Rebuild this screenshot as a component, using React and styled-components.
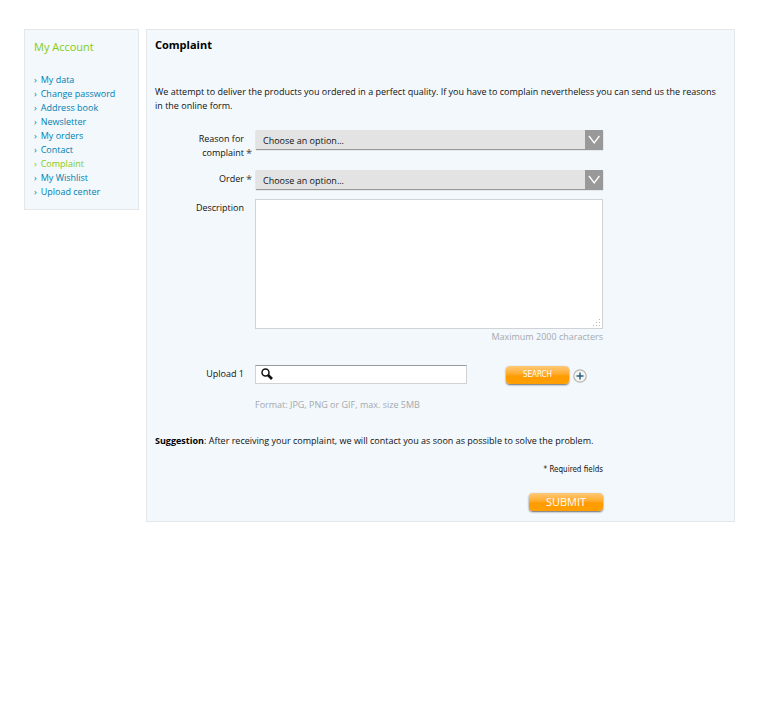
import React from 'react'
import styled, { createGlobalStyle } from "styled-components";

const GlobalStyle = createGlobalStyle`
    * {
        box-sizing: border-box;
    }

    body {
        margin: 0;
        background: #fff;
        color: #111;
        font-family: "Open Sans", "Noto Sans", sans-serif;
        font-size: 9px;
        line-height: 14px;
    }

    button, input, select, textarea {
        font: inherit;
        color: inherit;
        margin: 0;
    }
`;

const Page = styled.div`
    display: flex;
    align-items: flex-start;
    gap: 7px;
    padding: 29px 23px 29px 24px;
`;

const Panel = styled.div`
    background: #f2f8fc;
    border: 1px solid #e4e6e8;
`;

const Sidebar = styled(Panel)`
    flex: 0 0 115px;
    padding: 10px 9px;
`;

const SidebarTitle = styled.h2`
    margin: 0 0 19px;
    font-size: 11px;
    line-height: 14px;
    font-weight: normal;
    color: #84cb12;
`;

const Menu = styled.ul`
    margin: 0;
    padding: 0;
    list-style: none;
`;

const MenuLink = styled.a`
    display: flex;
    gap: 4px;
    white-space: nowrap;
    text-decoration: none;
    color: ${(props) => (props.$active ? "#84cb12" : "#0080b0")};
`;

const Content = styled(Panel)`
    flex: 1;
    min-width: 0;
    padding: 8px 8px 10px;
`;

const Title = styled.h1`
    margin: 0 0 33px;
    font-size: 11px;
    line-height: 14px;
    color: #000;
`;

const Text = styled.p`
    margin: 0;
    padding-right: 8px;
`;

const Form = styled.form`
    max-width: 448px;
    margin-top: 17px;
`;

const Row = styled.div`
    display: grid;
    grid-template-columns: 100px 1fr;
    margin-bottom: ${(props) => (props.$spaced ? "21px" : "10px")};
`;

const Label = styled.label`
    display: flex;
    align-items: flex-end;
    align-self: start;
    justify-content: flex-end;
    padding: 2px 0 0 32px;
    text-align: right;
`;

const Star = styled.span`
    flex: 0 0 11px;
    text-align: left;
    padding-left: 2px;
    font-size: 11px;
    color: #444;
`;

const SelectBox = styled.div`
    position: relative;
    align-self: start;
    height: 19px;
    margin-left: 1px;
    box-shadow: 0 1px 1px #999;

    select {
        display: block;
        width: 100%;
        height: 19px;
        padding: 2px 24px 0 7px;
        border: 0;
        border-radius: 0;
        appearance: none;
        background: #e3e3e3;
    }

    svg {
        position: absolute;
        top: 0;
        right: 0;
        background: #999;
        pointer-events: none;
    }
`;

const DescriptionBox = styled.div`
    position: relative;

    svg {
        position: absolute;
        right: 2px;
        bottom: 2px;
        pointer-events: none;
    }
`;

const TextArea = styled.textarea`
    display: block;
    width: 100%;
    height: 130px;
    padding: 4px;
    border: 1px solid #d0d3d5;
    background: #fff;
    resize: vertical;

    &::-webkit-resizer {
        background: transparent;
    }
`;

const Hint = styled.p`
    margin: ${(props) => (props.$right ? "1px 0 0" : "14px 0 0")};
    text-align: ${(props) => (props.$right ? "right" : "left")};
    color: #a6a9ac;
`;

const Upload = styled.div`
    display: flex;
    align-items: center;
    height: 19px;
`;

const FileField = styled.div`
    flex: 0 0 61%;
    display: flex;
    align-items: center;
    height: 19px;
    padding-left: 5px;
    border: 1px solid #d0d3d5;
    border-top: 1px solid #999;
    background: #fff;

    svg {
        margin-bottom: 2px;
    }

    input {
        flex: 1;
        min-width: 0;
        height: 15px;
        border: 0;
        background: none;
        outline: none;
    }
`;

const OrangeButton = styled.button`
    display: block;
    width: ${(props) => (props.$large ? "74px" : "63px")};
    height: 18px;
    margin-left: auto;
    padding: 0;
    border: 0;
    border-radius: 4px;
    background: linear-gradient(#ffc978, #ffab2b 45%, #ff9c00 55%, #ff9f00);
    box-shadow: 0 1px 2px #66686c;
    color: #fff;
    font-family: ${(props) => (props.$large ? "inherit" : '"DejaVu Sans Condensed", sans-serif')};
    font-size: ${(props) => (props.$large ? "11px" : "8px")};
    line-height: 18px;
    cursor: pointer;
`;

const AddButton = styled.button`
    display: flex;
    margin: 3px 16px 0 4px;
    padding: 0;
    border: 0;
    background: none;
    cursor: pointer;
`;

const Suggestion = styled(Text)`
    margin-top: 22px;

    strong {
        color: #000;
    }
`;

const Footer = styled.div`
    max-width: 448px;
    text-align: right;
`;

const Required = styled.p`
    margin: 15px 0 16px;
    font-family: "DejaVu Sans Condensed", sans-serif;
    font-size: 8px;
`;

const menuItems = [
  "My data",
  "Change password",
  "Address book",
  "Newsletter",
  "My orders",
  "Contact",
  "Complaint",
  "My Wishlist",
  "Upload center",
]

const SelectRow = ({ id, label }) => {
  return (
    <Row>
      <Label htmlFor={id}>
        <span>{label}</span>
        <Star>*</Star>
      </Label>
      <SelectBox>
        <select id={id} required>
          <option>Choose an option...</option>
        </select>
        <svg width="18" height="19" viewBox="0 0 18 19">
          <path d="M4 6 L9.2 13 L14.4 6" fill="none" stroke="#fff" strokeWidth="1.3" />
        </svg>
      </SelectBox>
    </Row>
  )
}

const App = () => {
  return (
    <>
      <GlobalStyle />
      <Page>
        <Sidebar as="nav">
          <SidebarTitle>My Account</SidebarTitle>
          <Menu>
            {
              menuItems.map((item) => (
                <li key={item}>
                  <MenuLink href="#" $active={item === "Complaint"}>
                    <span>›</span>
                    <span>{item}</span>
                  </MenuLink>
                </li>
              ))
            }
          </Menu>
        </Sidebar>

        <Content as="main">
          <Title>Complaint</Title>
          <Text>
            We attempt to deliver the products you ordered in a perfect quality. If you have to complain nevertheless you can send us the reasons in the online form.
          </Text>

          <Form id="complaint">
            <SelectRow id="reason" label="Reason for complaint" />
            <SelectRow id="order" label="Order" />
            <Row $spaced>
              <Label htmlFor="description">
                <span>Description</span>
                <Star />
              </Label>
              <div>
                <DescriptionBox>
                  <TextArea id="description" maxLength={2000} />
                  <svg width="8" height="8" viewBox="0 0 8 8" fill="#b4b4b4">
                    <path d="M6 0h1v1h-1z M3 3h1v1h-1z M6 3h1v1h-1z M0 6h1v1h-1z M3 6h1v1h-1z M6 6h1v1h-1z" />
                  </svg>
                </DescriptionBox>
                <Hint $right>Maximum 2000 characters</Hint>
              </div>
            </Row>
            <Row>
              <Label htmlFor="upload">
                <span>Upload 1</span>
                <Star />
              </Label>
              <div>
                <Upload>
                  <FileField>
                    <svg width="12" height="12" viewBox="0 0 12 12">
                      <circle cx="4.5" cy="4.5" r="3.5" fill="none" stroke="#111" strokeWidth="1.5" />
                      <path d="M7 7 L11 11" stroke="#111" strokeWidth="2.6" />
                    </svg>
                    <input id="upload" type="text" />
                  </FileField>
                  <OrangeButton type="button">SEARCH</OrangeButton>
                  <AddButton type="button" aria-label="Add upload">
                    <svg width="14" height="14" viewBox="0 0 14 14">
                      <circle cx="7" cy="7" r="6.2" fill="#f5f5f3" stroke="#b5b5b5" strokeWidth="1.2" />
                      <path d="M7 3.5 V10.5 M3.5 7 H10.5" stroke="#2b5f80" strokeWidth="1.5" />
                    </svg>
                  </AddButton>
                </Upload>
                <Hint>Format: JPG, PNG or GIF, max. size 5MB</Hint>
              </div>
            </Row>
          </Form>

          <Suggestion>
            <strong>Suggestion</strong>: After receiving your complaint, we will contact you as soon as possible to solve the problem.
          </Suggestion>
          <Footer>
            <Required>* Required fields</Required>
            <OrangeButton type="submit" form="complaint" $large>SUBMIT</OrangeButton>
          </Footer>
        </Content>
      </Page>
    </>
  )
}

export default App
